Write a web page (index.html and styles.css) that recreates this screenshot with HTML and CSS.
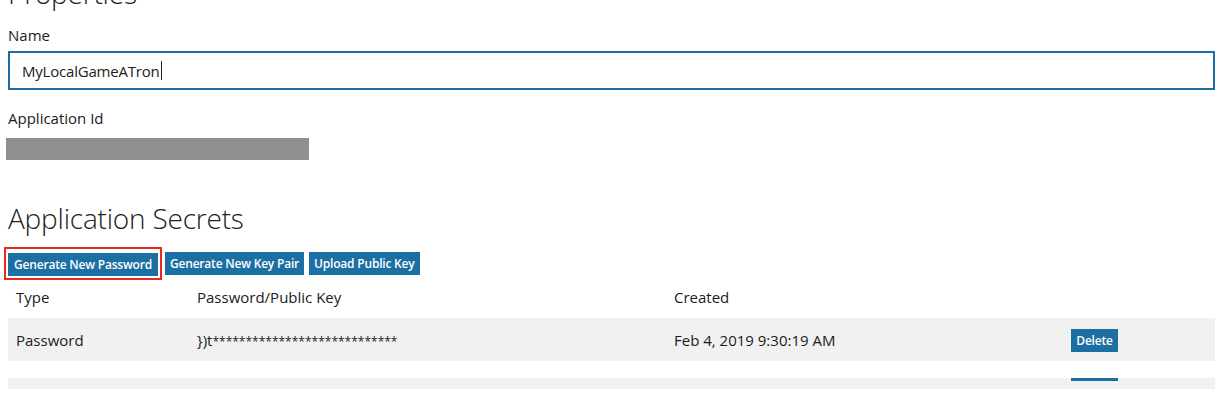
FILE: index.html
```html
<!DOCTYPE html>
<html>
<head>
<meta charset="utf-8">
<link rel="stylesheet" href="styles.css">
</head>
<body>
<h1 class="heading heading-top">Properties</h1>
<div class="field">
  <label class="label">Name</label>
  <div class="input"><span>MyLocalGameATron</span><span class="caret"></span></div>
</div>
<div class="field">
  <label class="label">Application Id</label>
  <div class="redacted"></div>
</div>
<h1 class="heading heading-secrets">Application Secrets</h1>
<div class="actions">
  <div class="highlight"><button class="btn">Generate New Password</button></div>
  <button class="btn">Generate New Key Pair</button>
  <button class="btn">Upload Public Key</button>
</div>
<div class="table">
  <div class="row head">
    <div class="cell">Type</div>
    <div class="cell">Password/Public Key</div>
    <div class="cell">Created</div>
    <div class="cell"></div>
  </div>
  <div class="row body">
    <div class="cell">Password</div>
    <div class="cell">})t<span class="stars">****************************</span></div>
    <div class="cell">Feb 4, 2019 9:30:19 AM</div>
    <div class="cell"><button class="btn small">Delete</button></div>
  </div>
  <div class="row partial">
    <div class="cell"></div>
    <div class="cell"></div>
    <div class="cell"></div>
    <div class="cell"><div class="sliver"></div></div>
  </div>
</div>
</body>
</html>
```
FILE: styles.css
```css
html, body {
  margin: 0;
  padding: 0;
  background: #fff;
}
body {
  padding: 0 8px;
  font-family: "Open Sans", "Noto Sans", sans-serif;
  color: #1b1b1b;
  overflow: hidden;
  height: 405px;
}
.heading {
  font-weight: 300;
  font-size: 28px;
  line-height: 34px;
  margin: 0;
  color: #222;
  letter-spacing: -0.2px;
}
.heading-top {
  margin-top: -24px;
}
.field {
  display: flex;
  flex-direction: column;
}
.label {
  font-size: 15px;
  line-height: 20px;
  margin-top: 15px;
  margin-bottom: 6px;
}
.field + .field .label {
  margin-top: 18px;
  margin-bottom: 10px;
}
.input {
  box-sizing: border-box;
  height: 39px;
  border: 2px solid #1a6ea3;
  display: flex;
  align-items: center;
  padding-left: 12px;
  font-size: 15px;
  letter-spacing: -0.2px;
  color: #222;
}
.caret {
  display: inline-block;
  width: 1px;
  height: 19px;
  background: #222;
  margin-left: 1px;
}
.redacted {
  width: 303px;
  height: 22px;
  background: #909090;
  margin-left: -2px;
}
.heading-secrets {
  margin-top: 41px;
}
.actions {
  display: flex;
  align-items: center;
  gap: 5px;
  margin-top: 12px;
}
.highlight {
  border: 2px solid #e8291c;
  padding: 4px 2px 2px 2px;
  margin-left: -4px;
  margin-right: -2px;
}
.btn {
  font-family: "Open Sans", "Noto Sans", sans-serif;
  font-weight: 600;
  font-size: 12px;
  letter-spacing: -0.2px;
  color: #fff;
  background: #1b6fa2;
  border: none;
  height: 23px;
  padding: 0 5px;
  line-height: 23px;
  display: block;
}
.highlight .btn {
  width: 150px;
}
.table {
  margin-top: -4px;
}
.row {
  display: grid;
  grid-template-columns: 181px 477px 397px 1fr;
  align-items: center;
  font-size: 15px;
}
.cell {
  padding-left: 8px;
}
.head {
  height: 42px;
}
.body {
  background: #f1f1f1;
  height: 43px;
}
.stars {
  font-size: 12px;
}
.body .btn.small {
  height: 23px;
  width: 47px;
  padding: 0;
  text-align: center;
  margin-top: 1px;
}
.partial {
  background: #f1f1f1;
  height: 11px;
  margin-top: 17px;
  align-items: start;
}
.sliver {
  width: 47px;
  height: 3px;
  background: #1b6fa2;
}
```
